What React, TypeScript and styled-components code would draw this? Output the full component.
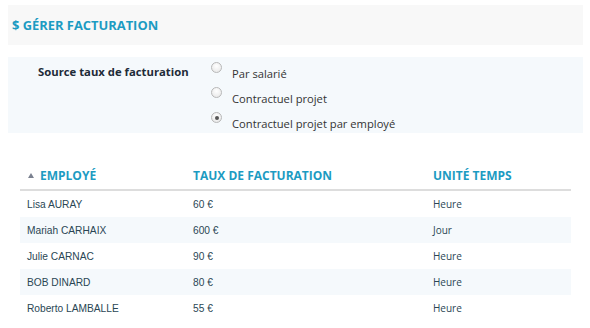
import React from "react";
import styled, { createGlobalStyle } from "styled-components";

const GlobalStyle = createGlobalStyle`
  html, body {
    margin: 0;
    padding: 0;
    background: #ffffff;
  }
  body {
    font-family: "Open Sans", "Liberation Sans", Arial, sans-serif;
    color: #333333;
  }
`;

const Page = styled.div`
  width: 590px;
  height: 328px;
  padding: 5px 7px 0 8px;
  box-sizing: border-box;
  overflow: hidden;
`;

const TitleBar = styled.div`
  height: 40px;
  background: #f8f8f8;
  display: flex;
  align-items: center;
  padding-left: 4px;
`;

const Title = styled.h2`
  margin: 0;
  font-size: 12.9px;
  font-weight: 700;
  color: #1c9bc2;
  letter-spacing: 0;
`;

const FormPanel = styled.div`
  margin-top: 12px;
  height: 76px;
  background: #f5f9fc;
  display: grid;
  grid-template-columns: 173px 1fr;
  padding: 5px 0 0 30px;
  box-sizing: border-box;
`;

const FieldLabel = styled.div`
  font-size: 11.3px;
  font-weight: 700;
  color: #1e2b38;
  line-height: 16px;
  padding-top: 2px;
`;

const Options = styled.div`
  display: flex;
  flex-direction: column;
  gap: 9px;
`;

const Option = styled.label`
  display: flex;
  align-items: flex-start;
  gap: 10px;
  font-size: 11.2px;
  color: #333333;
  height: 16px;
`;

const Radio = styled.span<{ $checked?: boolean }>`
  width: 11px;
  height: 11px;
  border-radius: 50%;
  border: 1px solid #b8b8b8;
  background: radial-gradient(circle at 50% 35%, #ffffff 0%, #e4e4e4 100%);
  box-sizing: border-box;
  position: relative;
  flex: none;
  &::after {
    content: "";
    display: ${(p) => (p.$checked ? "block" : "none")};
    position: absolute;
    left: 2.5px;
    top: 2.5px;
    width: 4px;
    height: 4px;
    border-radius: 50%;
    background: #555555;
  }
`;

const OptionText = styled.span`
  margin-top: 4px;
  line-height: 16px;
`;

const Table = styled.div`
  margin: 27px 12px 0 12px;
`;

const Row = styled.div<{ $striped?: boolean; $head?: boolean }>`
  display: grid;
  grid-template-columns: 166px 240px 1fr;
  height: ${(p) => (p.$head ? "31px" : "26px")};
  align-items: center;
  padding: 0 7px;
  box-sizing: border-box;
  background: ${(p) => (p.$striped ? "#f5f9fc" : "transparent")};
  border-bottom: ${(p) => (p.$head ? "2px solid #dddddd" : "none")};
`;

const HeadCell = styled.div`
  font-size: 12px;
  font-weight: 700;
  color: #1c9bc2;
  display: flex;
  align-items: center;
  gap: 6px;
  padding-top: 2px;
`;

const SortIcon = styled.span`
  width: 0;
  height: 0;
  border-left: 3.5px solid transparent;
  border-right: 3.5px solid transparent;
  border-bottom: 5px solid #7b8190;
  margin-left: 1px;
`;

const Cell = styled.div<{ $sans?: boolean }>`
  font-family: ${(p) =>
    p.$sans ? `"Open Sans", sans-serif` : `"Liberation Sans", Arial, sans-serif`};
  font-size: ${(p) => (p.$sans ? "10px" : "10.2px")};
  color: #2a4654;
`;

const rows = [
  { name: "Lisa AURAY", rate: "60 €", unit: "Heure" },
  { name: "Mariah CARHAIX", rate: "600 €", unit: "Jour" },
  { name: "Julie CARNAC", rate: "90 €", unit: "Heure" },
  { name: "BOB DINARD", rate: "80 €", unit: "Heure" },
  { name: "Roberto LAMBALLE", rate: "55 €", unit: "Heure" },
];

const options = [
  { label: "Par salarié", checked: false },
  { label: "Contractuel projet", checked: false },
  { label: "Contractuel projet par employé", checked: true },
];

export default function App() {
  return (
    <>
      <GlobalStyle />
      <Page>
        <TitleBar>
          <Title>$ GÉRER FACTURATION</Title>
        </TitleBar>

        <FormPanel>
          <FieldLabel>Source taux de facturation</FieldLabel>
          <Options>
            {options.map((o) => (
              <Option key={o.label}>
                <Radio $checked={o.checked} />
                <OptionText>{o.label}</OptionText>
              </Option>
            ))}
          </Options>
        </FormPanel>

        <Table>
          <Row $head>
            <HeadCell>
              <SortIcon />
              EMPLOYÉ
            </HeadCell>
            <HeadCell>TAUX DE FACTURATION</HeadCell>
            <HeadCell>UNITÉ TEMPS</HeadCell>
          </Row>
          {rows.map((r, i) => (
            <Row key={r.name} $striped={i % 2 === 1}>
              <Cell>{r.name}</Cell>
              <Cell>{r.rate}</Cell>
              <Cell $sans>{r.unit}</Cell>
            </Row>
          ))}
        </Table>
      </Page>
    </>
  );
}
